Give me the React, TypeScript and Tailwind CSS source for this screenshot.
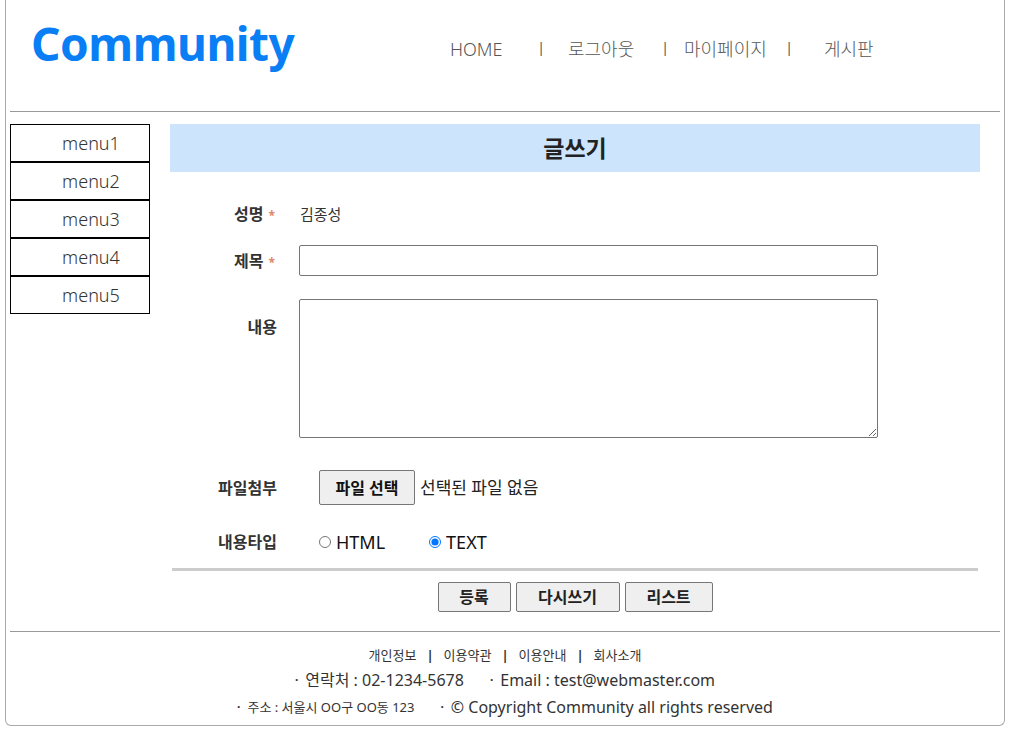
import React from "react";

const font = { fontFamily: '"Noto Sans", "Noto Sans CJK KR", sans-serif' };

function Header() {
  const nav = [
    { label: "HOME", w: "w-[89px]" },
    { label: "l", w: "w-[29px]" },
    { label: "로그아웃", w: "w-[95px]" },
    { label: "l", w: "w-[21px]" },
    { label: "마이페이지", w: "w-[103px]" },
    { label: "l", w: "w-[37px]" },
    { label: "게시판", w: "w-[80px]" },
  ];
  return (
    <header className="flex h-[111px] items-center">
      <h1 className="ml-[21px] w-[419px] text-[46px] font-bold leading-none tracking-[-0.5px] text-[#0a7ff5] -mt-[25px]">
        Community
      </h1>
      <nav className="flex text-[18px] font-light text-[#555] -mt-[12px]">
        {nav.map((n, i) => (
          <span key={i} className={n.w}>
            {n.label}
          </span>
        ))}
      </nav>
    </header>
  );
}

function Sidebar() {
  const items = ["menu1", "menu2", "menu3", "menu4", "menu5"];
  return (
    <aside className="w-[140px] shrink-0">
      {items.map((m) => (
        <div
          key={m}
          className="flex h-[38px] items-center justify-center border border-black pl-[22px] text-[18px] font-light text-[#333]"
        >
          {m}
        </div>
      ))}
    </aside>
  );
}

function Label({ text, pt }: { text: string; pt?: string }) {
  return (
    <div className={`w-[107px] shrink-0 text-right text-[16px] font-bold text-[#333] ${pt ?? ""}`}>
      {text}
    </div>
  );
}

function StarLabel({ text }: { text: string }) {
  return (
    <div className="w-[107px] shrink-0 pr-[2px] text-right text-[16px] font-bold text-[#333]">
      {text}
      <span className="ml-[5px] text-[12px] text-[#e0866a]">*</span>
    </div>
  );
}

function WriteForm() {
  return (
    <main className="w-[810px]">
      <div className="flex h-[48px] items-center justify-center bg-[#cce5fc] text-[23px] font-bold text-[#222]">
        글쓰기
      </div>

      <div className="mt-[26px] flex h-[32px] items-center">
        <StarLabel text="성명" />
        <div className="ml-[23px] text-[15px] text-[#333]">김종성</div>
      </div>

      <div className="mt-[15px] flex h-[31px] items-center">
        <StarLabel text="제목" />
        <input
          type="text"
          className="ml-[22px] h-[31px] w-[579px] rounded-[2px] border border-[#767676] bg-white px-2"
        />
      </div>

      <div className="mt-[23px] flex">
        <Label text="내용" pt="pt-[16px]" />
        <textarea className="ml-[22px] h-[139px] w-[579px] rounded-[2px] border border-[#767676] bg-white" />
      </div>

      <div className="mt-[32px] flex h-[35px] items-center">
        <Label text="파일첨부" />
        <button className="ml-[42px] h-[35px] w-[96px] rounded-[2px] border border-[#767676] bg-[#efefef] text-[16px] font-bold text-[#111]">
          파일 선택
        </button>
        <span className="ml-[5px] text-[17px] text-[#222]">선택된 파일 없음</span>
      </div>

      <div className="mt-[23px] flex h-[28px] items-center">
        <Label text="내용타입" />
        <label className="ml-[42px] flex items-center text-[18px] text-[#111]">
          <input type="radio" name="type" className="m-0 mr-[5px] h-[12px] w-[12px]" />
          HTML
        </label>
        <label className="ml-[44px] flex items-center text-[18px] text-[#111]">
          <input type="radio" name="type" defaultChecked className="m-0 mr-[5px] h-[12px] w-[12px]" />
          TEXT
        </label>
      </div>

      <div className="mx-[2px] mt-[12px] h-[3px] bg-[#cccccc]" />

      <div className="mt-[11px] flex justify-center gap-[5px]">
        {[
          { t: "등록", w: "w-[73px]" },
          { t: "다시쓰기", w: "w-[104px]" },
          { t: "리스트", w: "w-[88px]" },
        ].map((b) => (
          <button
            key={b.t}
            className={`${b.w} h-[30px] rounded-[2px] border border-[#767676] bg-[#efefef] text-[16px] font-bold text-[#222]`}
          >
            {b.t}
          </button>
        ))}
      </div>
    </main>
  );
}

function Footer() {
  return (
    <footer className="mt-[19px] border-t border-[#999] pt-[13px] text-center text-[#333]">
      <div className="flex items-center justify-center text-[13px] leading-[20px]">
        <span>개인정보</span>
        <span className="mx-[10px] font-bold">|</span>
        <span>이용약관</span>
        <span className="mx-[10px] font-bold">|</span>
        <span>이용안내</span>
        <span className="mx-[10px] font-bold">|</span>
        <span>회사소개</span>
      </div>
      <div className="mt-[4px] flex items-center justify-center text-[16px] leading-[22px]">
        <span className="mr-[7px] text-[12px] font-bold">·</span>
        <span>연락처 : 02-1234-5678</span>
        <span className="ml-[26px] mr-[7px] text-[12px] font-bold">·</span>
        <span>Email : test@webmaster.com</span>
      </div>
      <div className="mt-[5px] flex items-center justify-center leading-[22px]">
        <span className="mr-[7px] text-[12px] font-bold">·</span>
        <span className="text-[13px]">주소 : 서울시 OO구 OO동 123</span>
        <span className="ml-[26px] mr-[7px] text-[12px] font-bold">·</span>
        <span className="text-[16px]">© Copyright Community all rights reserved</span>
      </div>
    </footer>
  );
}

export default function App() {
  return (
    <div className="min-h-[735px] bg-white" style={font}>
      <div className="ml-[5px] h-[726px] w-[1000px] rounded-b-[6px] border-x border-b border-[#aaa] px-[4px]">
        <Header />
        <div className="border-t border-[#999]" />
        <div className="mt-[12px] flex gap-[20px]">
          <Sidebar />
          <WriteForm />
        </div>
        <Footer />
      </div>
    </div>
  );
}
